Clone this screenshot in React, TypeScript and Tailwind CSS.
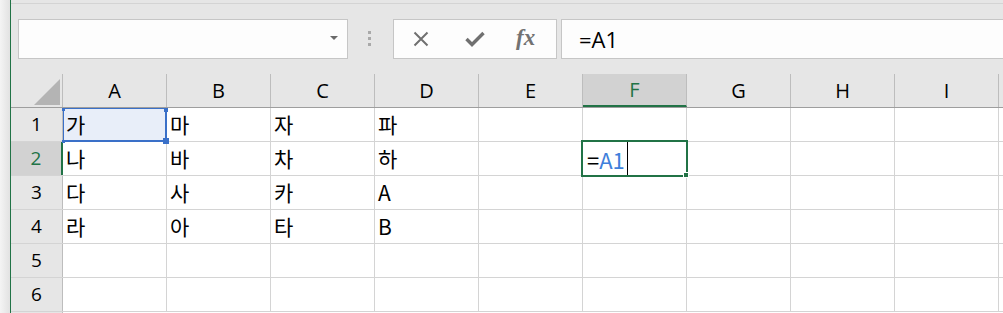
import React from 'react';

const COLS = ['A', 'B', 'C', 'D', 'E', 'F', 'G', 'H', 'I'];

const DATA: string[][] = [
  ['가', '마', '자', '파'],
  ['나', '바', '차', '하'],
  ['다', '사', '카', 'A'],
  ['라', '아', '타', 'B'],
  [],
  [],
];

const uiFont = { fontFamily: '"Open Sans", "Noto Sans", sans-serif' };
const cellFont = { fontFamily: '"Noto Sans CJK KR", "Noto Sans", sans-serif' };

function NameBox() {
  return (
    <div className="relative shrink-0 w-[330px] h-[40px] border border-[#c6c6c6] bg-[#fdfdfd]">
      {/* dropdown arrow */}
      <div className="absolute right-[9px] top-[16px] w-0 h-0 border-l-[4px] border-r-[4px] border-t-[4px] border-l-transparent border-r-transparent border-t-[#6a6a6a]" />
    </div>
  );
}

function Grip() {
  return (
    <div className="flex flex-col gap-[3px] ml-[20px] mt-[12px]">
      <div className="w-[3px] h-[3px] bg-[#a9a9a9]" />
      <div className="w-[3px] h-[3px] bg-[#a9a9a9]" />
      <div className="w-[3px] h-[3px] bg-[#a9a9a9]" />
    </div>
  );
}

function FormulaButtons() {
  return (
    <div className="shrink-0 ml-[22px] w-[164px] h-[40px] border border-[#c6c6c6] bg-[#fdfdfd] flex items-center">
      <svg className="ml-[19px]" width="16" height="16" viewBox="0 0 16 16">
        <path d="M1.5 1.5L14.5 14.5M14.5 1.5L1.5 14.5" stroke="#707070" strokeWidth="2" fill="none" />
      </svg>
      <svg className="ml-[36px]" width="20" height="16" viewBox="0 0 20 16">
        <path d="M1.5 8L7 13.5L18.5 2" stroke="#707070" strokeWidth="3.4" fill="none" />
      </svg>
      <span
        className="ml-[31px] text-[23px] italic font-bold text-[#727272] leading-none -mt-[3px]"
        style={{ fontFamily: '"Liberation Serif", "DejaVu Serif", serif' }}
      >
        fx
      </span>
    </div>
  );
}

function FormulaInput() {
  return (
    <div className="ml-[4px] flex-1 h-[40px] border-y border-l border-[#c6c6c6] bg-[#fdfdfd] flex items-center pl-[17px]">
      <span className="text-[22px] text-black leading-none" style={uiFont}>
        =A1
      </span>
    </div>
  );
}

function Cell({ col, row, value }: { col: number; row: number; value?: string }) {
  const isA1 = col === 0 && row === 0;
  const isF2 = col === 5 && row === 1;
  return (
    <div
      className={`relative shrink-0 w-[104px] h-full border-r border-[#d4d4d4] flex items-center pl-[3px] ${
        isA1 ? 'bg-[#e8eef9]' : 'bg-white'
      }`}
    >
      {value && (
        <span className="text-[21px] leading-none text-black" style={cellFont}>
          {value}
        </span>
      )}
      {isA1 && (
        <div className="absolute top-0 left-0 right-[-1px] bottom-[-1px] border-t border-l border-r-2 border-b-2 border-[#3a70c8] z-10">
          <div className="absolute -top-[1px] -left-[2px] w-[3px] h-[3px] bg-[#3a70c8]" />
          <div className="absolute -top-[1px] -right-[3px] w-[4px] h-[4px] bg-[#3a70c8]" />
          <div className="absolute -bottom-[3px] -left-[2px] w-[3px] h-[3px] bg-[#3a70c8]" />
          <div className="absolute -bottom-[4px] -right-[4px] w-[6px] h-[6px] bg-[#3a70c8]" />
        </div>
      )}
      {isF2 && (
        <div className="absolute top-[-2px] left-[-2px] right-[-2px] bottom-[-2px] border-2 border-[#217346] bg-white z-20 flex items-center pl-[4px]">
          <span className="text-[22px] leading-none" style={cellFont}>
            <span className="text-black">=</span>
            <span className="text-[#3f7fdb]">A1</span>
          </span>
          <div className="ml-[2px] w-px self-stretch bg-black" />
          <div className="absolute -right-[3px] -bottom-[3px] w-[6px] h-[6px] bg-[#217346] border border-white" />
        </div>
      )}
    </div>
  );
}

export default function App() {
  return (
    <div className="w-[1003px] h-[313px] overflow-hidden flex bg-[#e6e6e6]">
      {/* left edge */}
      <div className="w-[10px] h-full bg-gradient-to-r from-[#f4f4f4] to-[#e2e2e2]" />
      <div className="w-px h-full bg-[#217346]" />

      <div className="flex-1 flex flex-col min-w-0">
        <div className="h-[3px] shrink-0" />

        {/* Formula bar */}
        <div className="h-[71px] shrink-0 border-t border-[#d4d4d4] flex items-start pt-[15px] pl-[7px]">
          <NameBox />
          <Grip />
          <FormulaButtons />
          <FormulaInput />
        </div>

        {/* Column headers */}
        <div className="h-[34px] shrink-0 flex border-b border-[#9e9e9e]" style={uiFont}>
          <div className="relative shrink-0 w-[52px] h-full border-r border-[#bdbdbd]">
            <svg className="absolute right-[2px] bottom-[2px]" width="26" height="26" viewBox="0 0 26 26">
              <path d="M26 0L26 26L0 26Z" fill="#b4b4b4" />
            </svg>
          </div>
          {COLS.map((c) => (
            <div
              key={c}
              className={`shrink-0 w-[104px] h-full flex items-center justify-center text-[20px] border-r border-[#bdbdbd] ${
                c === 'F' ? 'bg-[#d2d2d2] text-[#217346] border-b-2 border-b-[#217346] -mb-px' : 'text-black'
              }`}
            >
              {c}
            </div>
          ))}
          <div className="flex-1 h-full" />
        </div>

        {/* Rows */}
        {DATA.map((row, r) => (
          <div key={r} className="h-[34px] shrink-0 flex border-b border-[#d4d4d4] bg-white">
            <div
              className={`shrink-0 w-[52px] h-full flex items-center justify-center text-[19px] ${
                r === 1
                  ? 'bg-[#d2d2d2] text-[#217346] border-r-2 border-r-[#217346]'
                  : 'bg-[#e6e6e6] text-black border-r border-r-[#bdbdbd]'
              }`}
              style={uiFont}
            >
              {r + 1}
            </div>
            {COLS.map((c, ci) => (
              <Cell key={c} col={ci} row={r} value={row[ci]} />
            ))}
            <div className="flex-1 h-full bg-white" />
          </div>
        ))}
        <div className="flex-1 flex">
          <div className="w-[52px] shrink-0 border-r border-[#bdbdbd] bg-[#e6e6e6]" />
          <div className="flex-1 bg-white" />
        </div>
      </div>
    </div>
  );
}
